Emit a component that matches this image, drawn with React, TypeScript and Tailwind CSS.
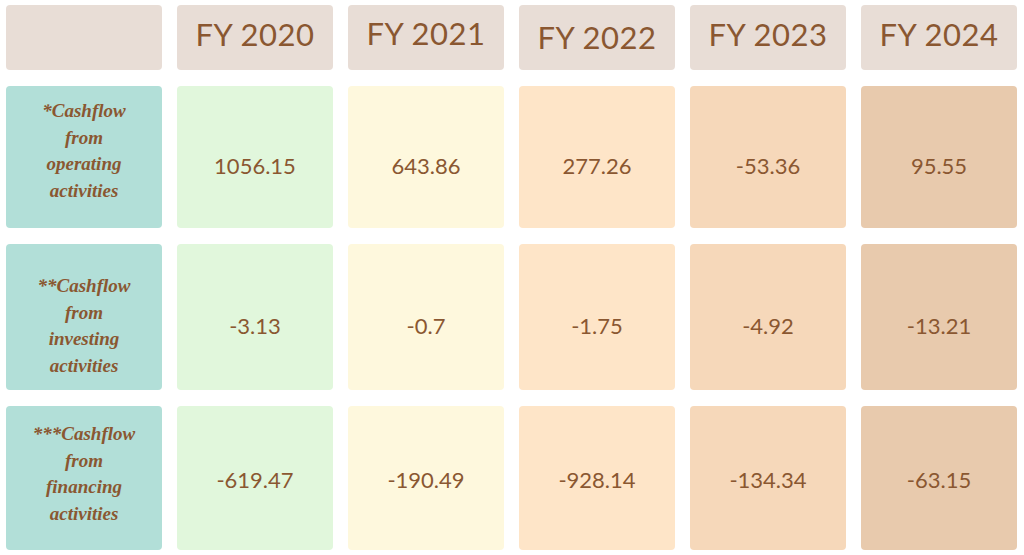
import React from "react";

const years = ["FY 2020", "FY 2021", "FY 2022", "FY 2023", "FY 2024"];
const yearPad = ["pb-[6px]", "pb-[8px]", "pb-[0px]", "pb-[6px]", "pb-[6px]"];
const colBg = ["bg-[#e1f7dc]", "bg-[#fef8dd]", "bg-[#fee5c8]", "bg-[#f6d8ba]", "bg-[#e8caad]"];
const rows = [
  {
    label: ["*Cashflow", "from", "operating", "activities"],
    labelPad: "pb-[12px]",
    valPad: "pt-[16px]",
    values: ["1056.15", "643.86", "277.26", "-53.36", "95.55"],
  },
  {
    label: ["**Cashflow", "from", "investing", "activities"],
    labelPad: "pt-[18px]",
    valPad: "pt-[16px]",
    values: ["-3.13", "-0.7", "-1.75", "-4.92", "-13.21"],
  },
  {
    label: ["***Cashflow", "from", "financing", "activities"],
    labelPad: "pb-[8px]",
    valPad: "pt-[3px]",
    values: ["-619.47", "-190.49", "-928.14", "-134.34", "-63.15"],
  },
];

export default function App() {
  return (
    <div className="w-[1024px] h-[555px] bg-white overflow-hidden pt-[5px] pl-[6px]">
      <div className="grid grid-cols-[repeat(6,156px)] grid-rows-[65px_142px_146px_144px] gap-x-[15px] gap-y-[16px] text-[#8a5731]">
        <div className="rounded bg-[#e8ddd6]" />
        {years.map((y, i) => (
          <div
            key={y}
            className={`rounded bg-[#e8ddd6] flex items-center justify-center ${yearPad[i]} text-[31px] font-['Lato',sans-serif] tracking-[0.5px]`}
          >
            {y}
          </div>
        ))}
        {rows.map((r) => (
          <React.Fragment key={r.label[0]}>
            <div
              className={`rounded bg-[#b2dfd8] flex flex-col items-center justify-center ${r.labelPad} text-[19px] leading-[26.5px] italic font-semibold font-['Liberation_Serif',serif]`}
            >
              {r.label.map((l) => (
                <span key={l}>{l}</span>
              ))}
            </div>
            {r.values.map((v, i) => (
              <div
                key={i}
                className={`rounded ${colBg[i]} flex items-center justify-center ${r.valPad} text-[22px] font-normal font-['Lato',sans-serif]`}
              >
                {v}
              </div>
            ))}
          </React.Fragment>
        ))}
      </div>
    </div>
  );
}
